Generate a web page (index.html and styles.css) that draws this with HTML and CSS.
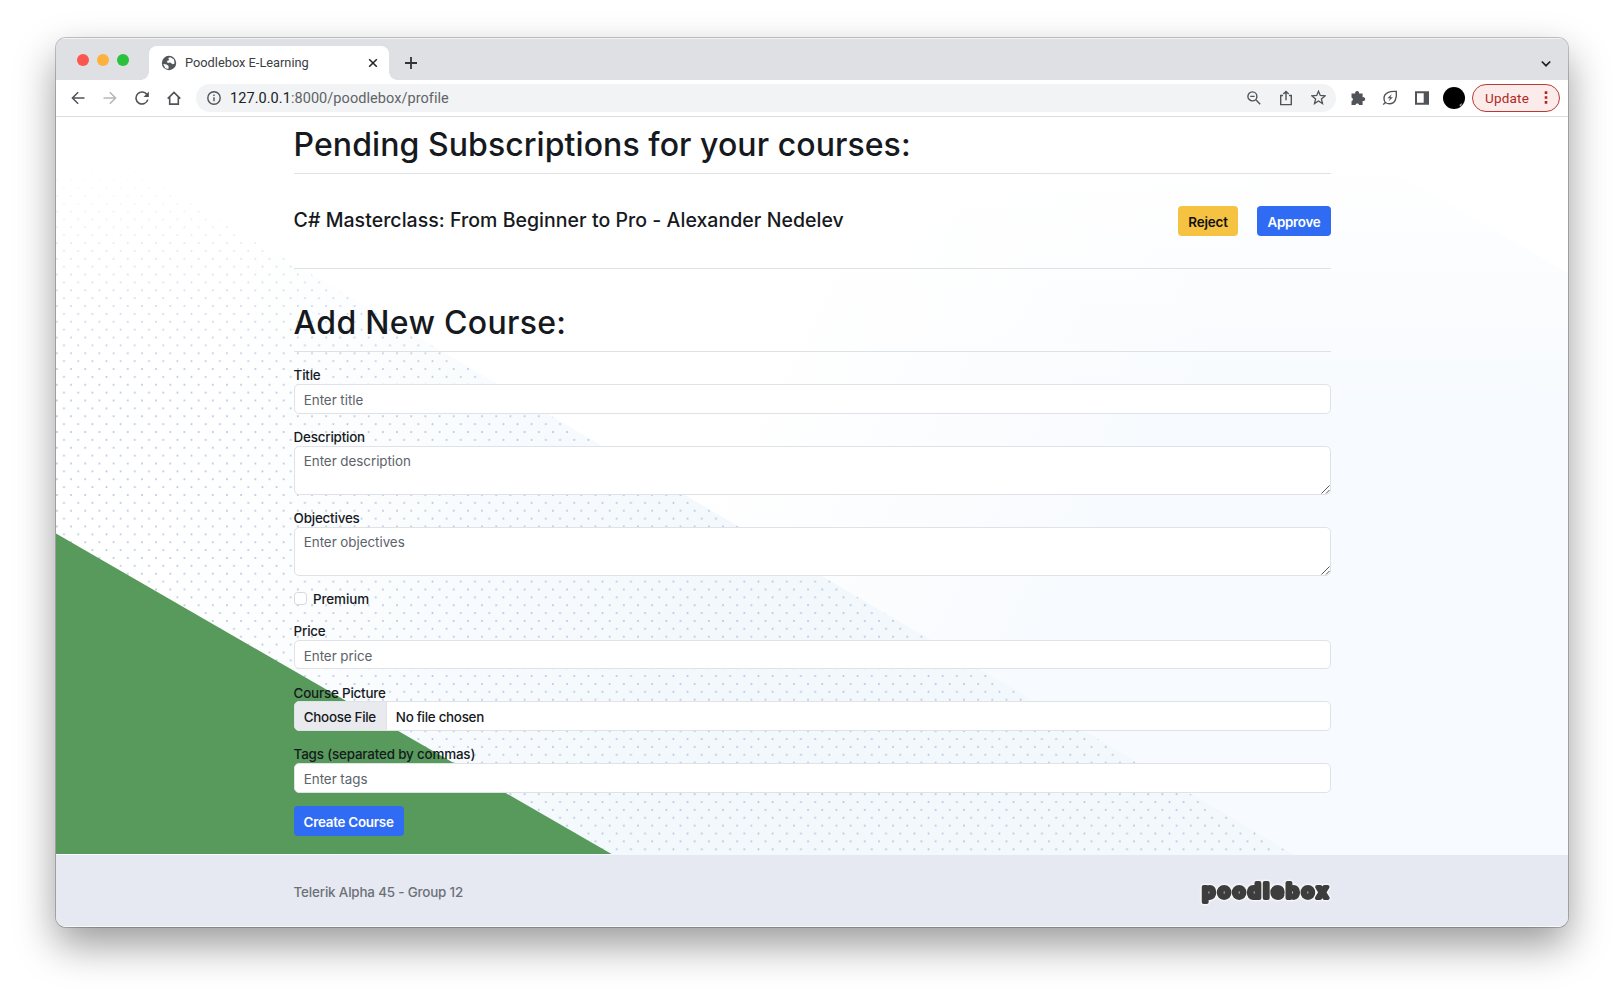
FILE: index.html
```html
<!DOCTYPE html>
<html lang="en">
<head>
<meta charset="utf-8">
<title>Poodlebox E-Learning</title>
<link rel="stylesheet" href="styles.css">
</head>
<body>
<div class="window">
  <div class="tabstrip">
    <div class="lights"><i class="red"></i><i class="amber"></i><i class="green"></i></div>
    <div class="tab">
      <svg class="globe" width="16" height="16" viewBox="0 0 16 16"><circle cx="8" cy="8" r="7.2" fill="#53575c"/><path d="M2.2 9 5.6 9.4 7.6 11 7.4 14 4.4 13.2ZM7.2 3 9.4 2.2 13 4.6 13.6 8.6 11.6 9.2 9.2 7.6 6.6 8 6 6 8.2 5Z" fill="#fff"/></svg>
      <span class="tab-title">Poodlebox E-Learning</span>
      <svg class="close" width="10" height="10" viewBox="0 0 10 10" fill="none" stroke="#202124" stroke-width="1.5"><path d="M1.2 1.2 8.8 8.8M8.8 1.2 1.2 8.8"/></svg>
    </div>
    <svg class="plus" width="14" height="14" viewBox="0 0 14 14" fill="none" stroke="#303338" stroke-width="1.8"><path d="M7 1V13M1 7H13"/></svg>
    <svg class="chevron" width="12" height="8" viewBox="0 0 12 8" fill="none" stroke="#202124" stroke-width="1.7"><path d="M1.8 1.5 6 5.7 10.2 1.5"/></svg>
  </div>
  <div class="toolbar">
    <svg class="nav" width="14" height="14" viewBox="0 0 14 14" fill="none" stroke="#505459" stroke-width="1.5"><path d="M13.5 7H1.6M7.2 1.2 1.4 7 7.2 12.8"/></svg>
    <svg class="nav" width="14" height="14" viewBox="0 0 14 14" fill="none" stroke="#b4b6b9" stroke-width="1.5"><path d="M.5 7H12.4M6.8 1.2 12.6 7 6.8 12.8"/></svg>
    <svg class="nav" width="14" height="14" viewBox="0 0 14 14" fill="none" stroke="#505459" stroke-width="1.6"><path d="M12.2 4A6 6 0 1 0 12.8 8.6"/><path d="M13.9.5V5.9H8.5Z" fill="#505459" stroke="none"/></svg>
    <svg class="nav home" width="14" height="14" viewBox="0 0 14 14" fill="none" stroke="#505459" stroke-width="1.6"><path d="M.7 7.6 7 1.4 13.3 7.6M2.7 6V13.1H11.3V6"/></svg>
    <div class="omnibox">
      <svg width="14" height="14" viewBox="0 0 14 14" fill="none" stroke="#505459" stroke-width="1.4"><circle cx="7" cy="7" r="6.2"/><path d="M7 6.2V10.3M7 3.5V5"/></svg>
      <span class="url"><b>127.0.0.1</b>:8000/poodlebox/profile</span>
      <div class="actions">
        <svg width="14" height="14" viewBox="0 0 14 14" fill="none" stroke="#505459" stroke-width="1.4"><circle cx="5.4" cy="5.4" r="4.5"/><path d="M8.8 8.8 13.2 13.2M3.2 5.4H7.6"/></svg>
        <svg width="14" height="16" viewBox="0 0 14 16" fill="none" stroke="#505459" stroke-width="1.4"><path d="M4 5.5H1.7V14.6H12.3V5.5H10M7 10.2V1.8M4.3 4 7 1.4 9.7 4"/></svg>
        <svg width="15" height="15" viewBox="0 0 15 15" fill="none" stroke="#505459" stroke-width="1.3"><path d="M7.5 1.2 9.3 5.5 14 5.9 10.4 8.9 11.5 13.5 7.5 11 3.5 13.5 4.6 8.9 1 5.9 5.7 5.5Z"/></svg>
      </div>
    </div>
    <div class="extensions">
      <svg width="16" height="16" viewBox="0 0 16 16" fill="#505459"><path d="M1.5 3.6H5.2A2 2 0 1 1 9 3.6H12.6V7.2A2 2 0 1 1 12.6 11V14.9H9.2A2 2 0 0 0 5.4 14.9H1.5V11.2A2 2 0 0 0 1.5 7.4Z"/></svg>
      <svg width="16" height="16" viewBox="0 0 16 16" fill="none" stroke="#505459" stroke-width="1.4"><path d="M14.3 1.5C8 1 2 2.6 2 8.4 2 11.6 4.4 13.8 7.5 13.8 13.2 13.8 15 8 14.3 1.5ZM3.4 12.2 1.3 14.6"/><path d="M9.8 4 5.4 8.3H8L6.4 11.6 10.9 7.2H8.4Z" fill="#505459" stroke="none"/></svg>
      <svg width="16" height="16" viewBox="0 0 16 16" fill="#505459"><path d="M1 1.2H15V14.8H1ZM3 3.2V12.8H9.7V3.2Z" fill-rule="evenodd"/></svg>
      <svg class="avatar" width="22" height="22" viewBox="0 0 22 22"><circle cx="11" cy="11" r="11" fill="#000"/><path d="M16.5 18 18.6 16V18.2L17 19.5Z" fill="#aaa"/></svg>
    </div>
    <div class="update"><span>Update</span><svg width="4" height="13" viewBox="0 0 4 13" fill="#b3261e"><path d="M.7.3H3.3V2.9H.7ZM.7 5.2H3.3V7.8H.7ZM.7 10.1H3.3V12.7H.7Z"/></svg></div>
  </div>
  <div class="page">
    <svg class="backdrop" width="1512" height="738" viewBox="0 0 1512 738">
      <defs>
        <pattern id="dots" x=".91" y="78.8" width="14.173" height="15.746" patternUnits="userSpaceOnUse">
          <g fill="#b3c3e0"><circle cx="7.087" cy="7.873" r=".98"/><circle cx="0" cy="0" r=".98"/><circle cx="14.173" cy="0" r=".98"/><circle cx="0" cy="15.746" r=".98"/><circle cx="14.173" cy="15.746" r=".98"/></g>
        </pattern>
        <linearGradient id="fade" gradientUnits="userSpaceOnUse" x1="0" y1="40" x2="0" y2="270"><stop offset="0" stop-color="#000"/><stop offset=".5" stop-color="#888"/><stop offset="1" stop-color="#fff"/></linearGradient>
        <mask id="dotmask"><path d="M0 6 1238 738H0Z" fill="url(#fade)"/></mask>
        <linearGradient id="wash" gradientUnits="userSpaceOnUse" x1="700" y1="250" x2="1060" y2="430"><stop offset="0" stop-color="#fff"/><stop offset="1" stop-color="#f7fafe"/></linearGradient>
        <linearGradient id="washfade" gradientUnits="userSpaceOnUse" x1="0" y1="40" x2="0" y2="290"><stop offset="0" stop-color="#fff"/><stop offset="1" stop-color="#fff" stop-opacity="0"/></linearGradient>
        <linearGradient id="band" gradientUnits="userSpaceOnUse" x1="150" y1="250" x2="700" y2="400"><stop offset="0" stop-color="#f2f8fc" stop-opacity="0"/><stop offset="1" stop-color="#f2f8fc"/></linearGradient>
      </defs>
      <path d="M0-720 1512 156V738H0Z" fill="url(#wash)"/>
      <path d="M0 0H1512V300H0Z" fill="url(#washfade)"/>
      <path d="M0 6 1238 738H0Z" fill="url(#band)"/>
      <path d="M0 6 1238 738H0Z" fill="url(#dots)" mask="url(#dotmask)"/>
      <path d="M0 416.5 555.5 737H0Z" fill="#58995c"/>
    </svg>
    <main class="content">
      <h1 class="pending">Pending Subscriptions for your courses:</h1>
      <div class="subscription">
        <h2>C# Masterclass: From Beginner to Pro - Alexander Nedelev</h2>
        <div class="buttons"><button class="btn reject">Reject</button><button class="btn primary approve">Approve</button></div>
      </div>
      <h1 class="add">Add New Course:</h1>
      <form>
        <div class="field"><label>Title</label><div class="input">Enter title</div></div>
        <div class="field"><label>Description</label><div class="input area">Enter description<svg class="grip" width="9" height="9" viewBox="0 0 9 9" stroke="#555" stroke-width="1"><path d="M.5 8.5 8.5.5M5 8.5 8.5 5"/></svg></div></div>
        <div class="field"><label>Objectives</label><div class="input area">Enter objectives<svg class="grip" width="9" height="9" viewBox="0 0 9 9" stroke="#555" stroke-width="1"><path d="M.5 8.5 8.5.5M5 8.5 8.5 5"/></svg></div></div>
        <div class="check"><i class="box"></i><span>Premium</span></div>
        <div class="field"><label>Price</label><div class="input">Enter price</div></div>
        <div class="field"><label class="picture">Course Picture</label><div class="input file"><span class="choose">Choose File</span><span>No file chosen</span></div></div>
        <div class="field"><label class="tags">Tags (separated by commas)</label><div class="input">Enter tags</div></div>
        <button class="btn primary create" type="button">Create Course</button>
      </form>
    </main>
  </div>
  <footer class="footer"><span>Telerik Alpha 45 - Group 12</span>
    <svg class="logo" width="130" height="28" viewBox="0 0 130 28"><text x="1.5" y="20" textLength="125.5">poodlebox</text></svg>
  </footer>
</div>
</body>
</html>
```
FILE: styles.css
```css
* { box-sizing: border-box; }
body { margin: 0; width: 1624px; height: 1001px; overflow: hidden; background: #fff; padding: 38px 56px 74px; font-family: Inter, "Liberation Sans", sans-serif; color: #16191d; }
svg { display: block; flex: none; }
.window { height: 889px; border-radius: 10px; overflow: hidden; background: #fff; display: flex; flex-direction: column; box-shadow: 0 0 0 1px rgba(0,0,0,.22), 0 18px 40px rgba(0,0,0,.4); }

.tabstrip { height: 42px; background: #dee0e4; display: flex; align-items: flex-start; box-shadow: inset 0 1px #f2f3f5; }
.lights { display: flex; gap: 8px; padding: 15.5px 0 0 21px; width: 93px; }
.lights i { width: 12px; height: 12px; border-radius: 50%; }
.red { background: #fc5650; }
.amber { background: #fdb23d; }
.green { background: #2bc13f; }
.tab { width: 240px; height: 34px; margin-top: 8px; background: #fff; border-radius: 8px 8px 0 0; display: flex; align-items: center; padding: 0 11px 0 12px; font: 12.8px Roboto, sans-serif; color: #3c4043; position: relative; }
.tab::before, .tab::after { content: ""; position: absolute; bottom: 0; width: 8px; height: 8px; }
.tab::before { left: -8px; background: radial-gradient(circle at 0 0, transparent 7.5px, #fff 8px); }
.tab::after { right: -8px; background: radial-gradient(circle at 100% 0, transparent 7.5px, #fff 8px); }
.tab-title { margin-left: 8px; line-height: 34px; height: 34px; }
.close { margin-left: auto; }
.plus { margin: 18px 0 0 15px; }
.chevron { margin: 21.5px 16px 0 auto; }

.toolbar { height: 37px; border-bottom: 1px solid #dadce0; display: flex; align-items: center; padding: 0 8px 0 15px; font-family: Roboto, sans-serif; }
.nav { margin-right: 18px; }
.home { margin-right: 15px; }
.omnibox { width: 1140px; height: 28px; border-radius: 14px; background: #f1f3f4; display: flex; align-items: center; padding: 0 10px 0 11px; font-size: 14.5px; color: #5f6368; }
.omnibox b { font-weight: 400; color: #202124; }
.url { margin-left: 9px; line-height: 28px; padding-top: 2px; letter-spacing: .06px; }
.actions { display: flex; align-items: center; gap: 18px; margin-left: auto; }
.extensions { display: flex; align-items: center; gap: 16px; margin-left: 14px; }
.avatar { margin-left: -3px; }
.update { margin-left: auto; width: 88px; height: 28px; border: 1.5px solid #b93a32; border-radius: 14px; background: #fbeceb; display: flex; align-items: center; justify-content: space-between; padding: 0 11px 0 12px; font-size: 13.5px; letter-spacing: .2px; color: #b3261e; }

.page { height: 738px; position: relative; }
.backdrop { position: absolute; inset: 0; }
.content { position: relative; width: 1037.4px; margin-left: 237.6px; padding-top: 8px; }
h1 { margin: 0; font-size: 32px; line-height: 40px; font-weight: 500; padding-bottom: 8px; border-bottom: 1px solid #dfe2e5; }
.pending { letter-spacing: .07px; }
.add { margin-top: 33.7px; padding-bottom: 8.3px; letter-spacing: .3px; }
.subscription { height: 95px; border-bottom: 1px solid #dfe2e5; display: flex; justify-content: space-between; padding-top: 32px; }
h2 { margin: 2.2px 0 0; font-size: 19.5px; line-height: 24px; font-weight: 500; letter-spacing: .04px; }
.buttons { display: flex; gap: 19px; }
.btn { height: 30px; border: 0; border-radius: 4px; padding: 0; font: 600 13.4px/32px Inter, sans-serif; letter-spacing: -.26px; color: #fff; }
.reject { width: 60px; background: #f5c242; color: #111; letter-spacing: -.16px; }
.approve { width: 74px; }
.primary { background: #306bf3; }
.create { width: 110px; margin-top: -1px; }
form { padding-top: 14px; font-size: 13.4px; font-weight: 500; display: flex; flex-direction: column; align-items: flex-start; gap: 14px; }
.field { width: 100%; }
label { display: block; height: 18px; line-height: 19px; letter-spacing: -.2px; }
.picture { line-height: 20px; }
.tags { letter-spacing: -.17px; }
.input { height: 29.7px; border: 1px solid #dfe3e7; border-radius: 5px; background: #fff; padding-left: 9.2px; line-height: 30px; font-weight: 400; letter-spacing: -.04px; color: #5c636a; display: flex; }
.area { height: 49px; line-height: 28.5px; position: relative; }
.grip { position: absolute; right: 0; bottom: 0; }
.check { height: 17px; line-height: 17px; display: flex; align-items: center; gap: 6.3px; margin-bottom: 1px; letter-spacing: -.06px; }
.check span { padding-top: 2px; }
.box { width: 13px; height: 13px; border: 1px solid #d5d8dc; border-radius: 3.5px; background: #fff; }
.file { color: #16191d; font-weight: 500; padding: 0; letter-spacing: -.28px; }
.choose { width: 92px; background: #e9eaee; border-right: 1px solid #dfe3e7; border-radius: 4px 0 0 4px; padding-left: 9.2px; margin-right: 9.2px; white-space: nowrap; }

.footer { flex: 1; background: #e6e9f2; box-shadow: inset 0 -1px #f7f8fb; display: flex; justify-content: space-between; padding: 0 237px 0 237.6px; font-size: 13.4px; font-weight: 500; line-height: 75px; letter-spacing: -.17px; color: #6c7178; }
.footer span { padding-top: 3px; line-height: 69px; height: 72px; margin-top: 2px; }
.logo { margin-top: 24.5px; overflow: visible; font: 700 20px Inter, sans-serif; letter-spacing: 0; fill: #3d3d3d; stroke: #3d3d3d; stroke-width: 4px; stroke-linejoin: round; filter: drop-shadow(0 0 1px #fff) drop-shadow(0 0 1px #fff); }
```
